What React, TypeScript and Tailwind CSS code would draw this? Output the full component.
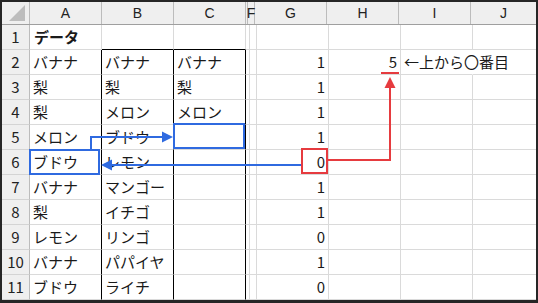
import React from "react";

const cols = [
    { key: "A", w: "w-[72px]", label: "A" },
    { key: "B", w: "w-[72px]", label: "B" },
    { key: "C", w: "w-[72px]", label: "C" },
    { key: "DE", w: "w-[2px]", label: "" },
    { key: "F", w: "w-[7px]", label: "F" },
    { key: "G", w: "w-[72px]", label: "G" },
    { key: "H", w: "w-[72px]", label: "H" },
    { key: "I", w: "w-[72px]", label: "I" },
    { key: "J", w: "w-[65px]", label: "J" },
];

const colA = ["データ", "バナナ", "梨", "梨", "メロン", "ブドウ", "バナナ", "梨", "レモン", "バナナ", "ブドウ"];
const colB = ["", "バナナ", "梨", "メロン", "ブドウ", "レモン", "マンゴー", "イチゴ", "リンゴ", "パパイヤ", "ライチ"];
const colC = ["", "バナナ", "梨", "メロン"];
const colG = ["", "1", "1", "1", "1", "0", "1", "1", "0", "1", "0"];

const cellText = (key: string, r: number) => {
    if (key === "A") return colA[r] ?? "";
    if (key === "B") return colB[r] ?? "";
    if (key === "C") return colC[r] ?? "";
    if (key === "G") return colG[r] ?? "";
    if (key === "H" && r === 1) return "5";
    if (key === "I" && r === 1) return "←上から〇番目";
    return "";
};

const Cell = ({ col, r }: { col: (typeof cols)[number]; r: number }) => {
    const text = cellText(col.key, r);
    const boxed = r >= 1 && (col.key === "A" || col.key === "B" || col.key === "C");
    const topOfBox = r === 0 && (col.key === "B" || col.key === "C");
    const right = col.key === "J" ? "" : boxed ? "border-r border-r-black" : col.key === "I" && r === 1 ? "border-r border-r-transparent" : "border-r border-r-[#dadada]";
    const bottom = topOfBox ? "border-b border-b-black" : "border-b border-b-[#dadada]";
    const align = col.key === "G" || col.key === "H" ? "justify-end pr-[3px]" : "justify-start pl-[3px]";
    return (
        <div className={`${col.w} h-[25px] shrink-0 flex items-center pb-[2px] ${right} ${bottom} ${align}`}>
            {text && (
                <span className={`whitespace-nowrap text-[15px] leading-none text-[#1a1a1a] ${r === 0 && col.key === "A" ? "font-bold pl-[1px]" : ""}`}>
                    {text}
                </span>
            )}
        </div>
    );
};

export default function App() {
    return (
        <div className="relative w-[538px] h-[303px] bg-[#262626] pt-[2px] pl-[2px] pr-[2px] pb-[3px]" style={{ fontFamily: '"Noto Sans CJK JP", "Noto Sans", sans-serif' }}>
            <div className="w-[534px] h-[298px] bg-white overflow-hidden flex flex-col">
                {/* column header */}
                <div className="flex h-[23px] shrink-0 bg-[#efefef] border-b border-b-[#9f9f9f]">
                    <div className="relative w-[28px] shrink-0 border-r border-r-[#bcbcbc]">
                        <div className="absolute left-[7px] top-[3px] w-0 h-0 border-l-[16px] border-l-transparent border-b-[16px] border-b-[#bdbdbd]" />
                    </div>
                    {cols.map((c) => (
                        <div key={c.key} className={`${c.w} shrink-0 flex items-center justify-center ${c.key === "J" ? "" : "border-r border-r-[#bcbcbc]"} overflow-visible`}>
                            <span className="text-[14px] leading-none text-[#222]" style={{ fontFamily: '"Liberation Sans", sans-serif' }}>{c.label}</span>
                        </div>
                    ))}
                </div>
                {Array.from({ length: 11 }).map((_, r) => (
                    <div key={r} className="flex shrink-0">
                        <div className="w-[28px] h-[25px] shrink-0 bg-[#efefef] border-r border-r-[#bcbcbc] border-b border-b-[#d4d4d4] flex items-center justify-center pb-[2px]">
                            <span className="text-[15px] leading-none text-[#222]">{r + 1}</span>
                        </div>
                        {cols.map((c) => (
                            <Cell key={c.key} col={c} r={r} />
                        ))}
                    </div>
                ))}
            </div>

            {/* drawn shapes on top of the sheet */}
            <svg className="absolute left-0 top-0 pointer-events-none" width="538" height="303" viewBox="0 0 538 303">
                <rect x="174" y="124" width="70" height="24" fill="none" stroke="#2f6ae0" strokeWidth="2" />
                <rect x="30" y="150" width="69" height="24" fill="none" stroke="#2f6ae0" strokeWidth="2" />
                <path d="M91 149 V137 H163" fill="none" stroke="#2f6ae0" strokeWidth="2" />
                <polygon points="173,137 162,131.5 162,142.5" fill="#2f6ae0" />
                <path d="M302 165 H111" fill="none" stroke="#2f6ae0" strokeWidth="2" />
                <polygon points="101,165 112,159.5 112,170.5" fill="#2f6ae0" />
                <rect x="302" y="149" width="25" height="24" fill="none" stroke="#e63b3f" strokeWidth="2" />
                <path d="M328 160 H390 V87" fill="none" stroke="#e63b3f" strokeWidth="2" />
                <polygon points="390,77 384.5,88 395.5,88" fill="#e63b3f" />
                <line x1="381" y1="73" x2="399" y2="73" stroke="#e63b3f" strokeWidth="2" />
            </svg>
        </div>
    );
}
